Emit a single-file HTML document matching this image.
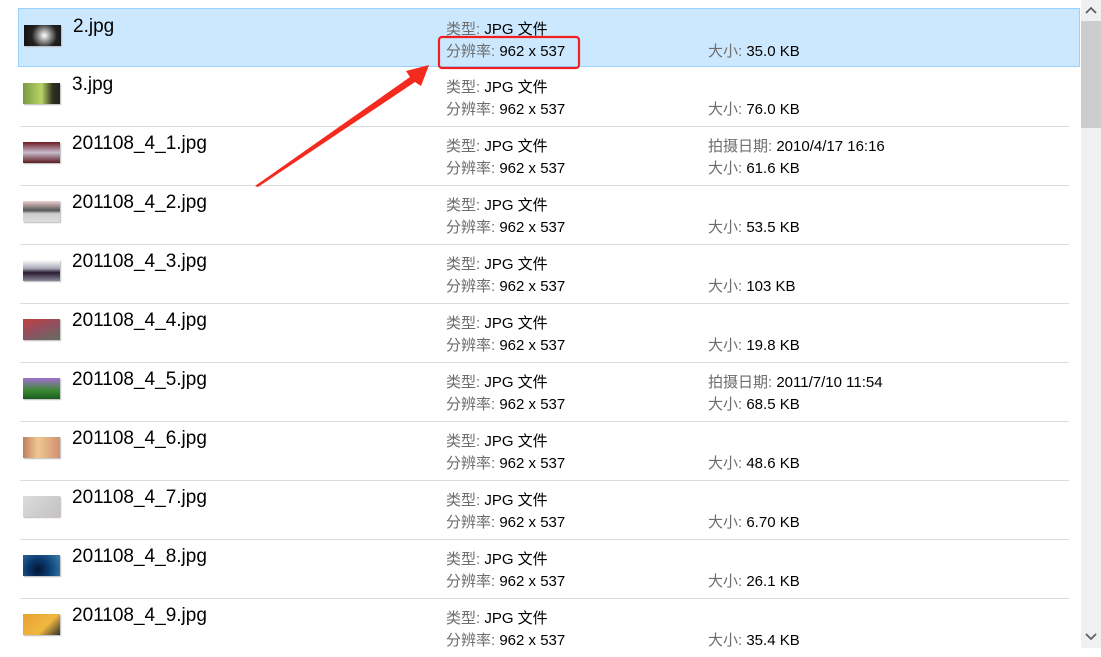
<!DOCTYPE html>
<html><head><meta charset="utf-8"><style>
*{margin:0;padding:0;box-sizing:border-box}
body{width:1101px;height:648px;overflow:hidden;background:#fff;position:relative;font-family:"Liberation Sans","Noto Sans CJK SC",sans-serif}
.row{position:absolute;left:18px;width:1062px;height:59px}
.sep{position:absolute;left:20px;width:1049px;height:1px;background:#dcdcdc}
.sel{background:#cce8ff;border:1px solid #99d1ff}
.th{position:absolute;left:5px;top:16px;width:37px;height:21px;box-shadow:1px 1px 1px #bbb}
.nm{position:absolute;left:54px;top:7px;font-size:19px;color:#000}
.t{position:absolute;font-size:15px;color:#000;white-space:nowrap}
.t b{font-weight:normal;color:#6d6d6d}
.sb{position:absolute;left:1081px;top:0;width:20px;height:648px;background:#f0f0f0}
.thumb{position:absolute;left:1081px;top:21px;width:20px;height:107px;background:#cdcdcd}
</style></head><body>

<div class="row sel" style="top:8px"><div class="th" style="background:radial-gradient(circle at 55% 50%,#fff 0,#999 25%,#222 55%,#111 100%)"></div><div class="nm">2.jpg</div><div class="t" style="left:427px;top:9px"><b>类型:</b> JPG 文件</div><div class="t" style="left:427px;top:31px"><b>分辨率:</b> 962 x 537</div><div class="t" style="left:689px;top:31px"><b>大小:</b> 35.0 KB</div></div>

<div class="row" style="top:67px"><div class="th" style="background:linear-gradient(90deg,#7a9a40,#b8d468 50%,#2e3320 80%,#222)"></div><div class="nm">3.jpg</div><div class="t" style="left:428px;top:9px"><b>类型:</b> JPG 文件</div><div class="t" style="left:428px;top:31px"><b>分辨率:</b> 962 x 537</div><div class="t" style="left:690px;top:31px"><b>大小:</b> 76.0 KB</div></div>
<div class="sep" style="top:126px"></div>

<div class="row" style="top:126px"><div class="th" style="background:linear-gradient(180deg,#6a1a22,#c9bccc 50%,#5a1a20)"></div><div class="nm">201108_4_1.jpg</div><div class="t" style="left:428px;top:9px"><b>类型:</b> JPG 文件</div><div class="t" style="left:428px;top:31px"><b>分辨率:</b> 962 x 537</div><div class="t" style="left:690px;top:9px"><b>拍摄日期:</b> 2010/4/17 16:16</div><div class="t" style="left:690px;top:31px"><b>大小:</b> 61.6 KB</div></div>
<div class="sep" style="top:185px"></div>

<div class="row" style="top:185px"><div class="th" style="background:linear-gradient(180deg,#f0d0d0,#555 45%,#ccc 60%,#ddd)"></div><div class="nm">201108_4_2.jpg</div><div class="t" style="left:428px;top:9px"><b>类型:</b> JPG 文件</div><div class="t" style="left:428px;top:31px"><b>分辨率:</b> 962 x 537</div><div class="t" style="left:690px;top:31px"><b>大小:</b> 53.5 KB</div></div>
<div class="sep" style="top:244px"></div>

<div class="row" style="top:244px"><div class="th" style="background:linear-gradient(180deg,#fff,#aab 40%,#2a1a30 60%,#889)"></div><div class="nm">201108_4_3.jpg</div><div class="t" style="left:428px;top:9px"><b>类型:</b> JPG 文件</div><div class="t" style="left:428px;top:31px"><b>分辨率:</b> 962 x 537</div><div class="t" style="left:690px;top:31px"><b>大小:</b> 103 KB</div></div>
<div class="sep" style="top:303px"></div>

<div class="row" style="top:303px"><div class="th" style="background:linear-gradient(160deg,#c04040,#905060 50%,#607060)"></div><div class="nm">201108_4_4.jpg</div><div class="t" style="left:428px;top:9px"><b>类型:</b> JPG 文件</div><div class="t" style="left:428px;top:31px"><b>分辨率:</b> 962 x 537</div><div class="t" style="left:690px;top:31px"><b>大小:</b> 19.8 KB</div></div>
<div class="sep" style="top:362px"></div>

<div class="row" style="top:362px"><div class="th" style="background:linear-gradient(180deg,#a070d0,#3a8a30 60%,#1a5a20)"></div><div class="nm">201108_4_5.jpg</div><div class="t" style="left:428px;top:9px"><b>类型:</b> JPG 文件</div><div class="t" style="left:428px;top:31px"><b>分辨率:</b> 962 x 537</div><div class="t" style="left:690px;top:9px"><b>拍摄日期:</b> 2011/7/10 11:54</div><div class="t" style="left:690px;top:31px"><b>大小:</b> 68.5 KB</div></div>
<div class="sep" style="top:421px"></div>

<div class="row" style="top:421px"><div class="th" style="background:linear-gradient(90deg,#c08060,#f0c890 40%,#d09070)"></div><div class="nm">201108_4_6.jpg</div><div class="t" style="left:428px;top:9px"><b>类型:</b> JPG 文件</div><div class="t" style="left:428px;top:31px"><b>分辨率:</b> 962 x 537</div><div class="t" style="left:690px;top:31px"><b>大小:</b> 48.6 KB</div></div>
<div class="sep" style="top:480px"></div>

<div class="row" style="top:480px"><div class="th" style="background:linear-gradient(135deg,#ddd,#ccc 60%,#c8c0c8)"></div><div class="nm">201108_4_7.jpg</div><div class="t" style="left:428px;top:9px"><b>类型:</b> JPG 文件</div><div class="t" style="left:428px;top:31px"><b>分辨率:</b> 962 x 537</div><div class="t" style="left:690px;top:31px"><b>大小:</b> 6.70 KB</div></div>
<div class="sep" style="top:539px"></div>

<div class="row" style="top:539px"><div class="th" style="background:radial-gradient(circle at 40% 70%,#051530 0,#0a3a70 40%,#3a80b0 100%)"></div><div class="nm">201108_4_8.jpg</div><div class="t" style="left:428px;top:9px"><b>类型:</b> JPG 文件</div><div class="t" style="left:428px;top:31px"><b>分辨率:</b> 962 x 537</div><div class="t" style="left:690px;top:31px"><b>大小:</b> 26.1 KB</div></div>
<div class="sep" style="top:598px"></div>

<div class="row" style="top:598px"><div class="th" style="background:linear-gradient(135deg,#e8a030,#f0b840 60%,#303030)"></div><div class="nm">201108_4_9.jpg</div><div class="t" style="left:428px;top:9px"><b>类型:</b> JPG 文件</div><div class="t" style="left:428px;top:31px"><b>分辨率:</b> 962 x 537</div><div class="t" style="left:690px;top:31px"><b>大小:</b> 35.4 KB</div></div>

<div class="sb"></div><div class="thumb"></div>
<svg style="position:absolute;left:0;top:0" width="1101" height="648">
<path d="M1086 13 L1091 8 L1096 13" fill="none" stroke="#606060" stroke-width="1.8"/>
<path d="M1086 634 L1091 639 L1096 634" fill="none" stroke="#606060" stroke-width="1.8"/>
<rect x="439" y="37" width="140" height="31" rx="3" fill="none" stroke="#f02020" stroke-width="2.2"/>
<polygon points="255,186 410,77 406,71 429,65 421,86 415,82 258,187" fill="#f52a1e"/>
</svg>
</body></html>
